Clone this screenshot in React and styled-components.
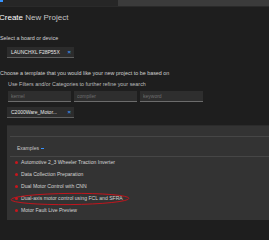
import React from "react";
import styled, { createGlobalStyle } from "styled-components";

const GlobalStyle = createGlobalStyle`
  html, body {
    margin: 0;
    padding: 0;
    background: #1e1e1e;
  }
  body {
    width: 269px;
    height: 240px;
    overflow: hidden;
    font-family: "Liberation Sans", Arial, sans-serif;
    color: #cccccc;
  }
`;

const TabBar = styled.div`
  display: flex;
  height: 6px;
  background: #3b3b3b;
  border-bottom: 1px solid #2a2a2a;
`;

const ActiveTab = styled.div`
  width: 118px;
  background: #262626;
  border-top: 2px solid transparent;
  box-sizing: border-box;
  position: relative;
  &::before {
    content: "";
    position: absolute;
    left: 0;
    top: -2px;
    width: 3px;
    height: 2px;
    background: #3794ff;
  }
`;

const Page = styled.div`
  display: flex;
  flex-direction: column;
  align-items: flex-start;
`;

const Title = styled.h1`
  margin: 6px 0 0 -1px;
  font-size: 8px;
  line-height: 9px;
  height: 9px;
  font-weight: normal;
  color: #c4c4c4;
  white-space: nowrap;
  span {
    color: #ffffff;
  }
`;

const Label = styled.div`
  margin-top: ${p => p.$top}px;
  margin-left: ${p => p.$left || 0}px;
  font-size: 5.4px;
  line-height: 6px;
  height: 6px;
  color: ${p => p.$dim ? "#bdbdbd" : "#d0d0d0"};
  white-space: nowrap;
`;

const Chip = styled.div`
  margin-top: ${p => p.$top}px;
  margin-left: 7px;
  width: 67px;
  height: 11px;
  box-sizing: border-box;
  background: #2c2c2c;
  border-bottom: 1px solid #5e5e5e;
  display: flex;
  align-items: center;
  justify-content: space-between;
  padding: 0 3px 0 4px;
  font-size: 5px;
  color: #e8e8e8;
  white-space: nowrap;
`;

const Remove = styled.span`
  color: #3b8eea;
  font-size: 6px;
  font-weight: bold;
  line-height: 6px;
`;

const FilterRow = styled.div`
  margin-top: 4px;
  margin-left: 8px;
  display: flex;
  gap: 3px;
`;

const Input = styled.input`
  width: 63px;
  height: 11px;
  box-sizing: border-box;
  margin: 0;
  padding: 0 3px;
  background: #2e2e2e;
  border: none;
  border-bottom: 1px solid #6c6c6c;
  outline: none;
  font-family: inherit;
  font-size: 5px;
  color: #cccccc;
  &::placeholder {
    color: #6e6e6e;
  }
`;

const Panel = styled.div`
  margin-top: 7px;
  margin-left: 7px;
  width: 262px;
  height: 95px;
  box-sizing: border-box;
  background: #333333;
  border-top: 1px solid #2b2b2b;
  padding: 10px 0 0 3px;
  position: relative;
`;

const ExamplesHeader = styled.div`
  border-top: 1px solid #464646;
  border-bottom: 1px solid #464646;
  display: flex;
  align-items: flex-end;
  padding: 0 0 5px 7px;
  box-sizing: border-box;
  height: 21px;
  font-size: 5px;
  line-height: 6px;
  color: #c8c8c8;
  gap: 2px;
`;

const Collapse = styled.span`
  display: inline-block;
  width: 3px;
  height: 1px;
  margin-bottom: 2px;
  background: #3794ff;
`;

const List = styled.ul`
  list-style: none;
  margin: -1px 0 0 0;
  padding: 0;
`;

const Item = styled.li`
  height: 12px;
  display: flex;
  align-items: center;
  gap: 3px;
  padding-left: 5px;
  font-size: 5.1px;
  color: #d4d4d4;
  white-space: nowrap;
`;

const Dot = styled.span`
  width: 3px;
  height: 3px;
  border-radius: 50%;
  background: #c8161d;
  flex: none;
`;

const Highlight = styled.svg`
  position: absolute;
  left: 2px;
  top: 66px;
  width: 122px;
  height: 14px;
  overflow: visible;
  pointer-events: none;
`;

const examples = [
  "Automotive 2_3 Wheeler Traction Inverter",
  "Data Collection Preparation",
  "Dual Motor Control with CNN",
  "Dual-axis motor control using FCL and SFRA",
  "Motor Fault Live Preview",
];

export default function App() {
  return (
    <>
      <GlobalStyle />
      <TabBar>
        <ActiveTab />
      </TabBar>
      <Page>
        <Title>
          <span>Create</span> New Project
        </Title>
        <Label $top={13}>Select a board or device</Label>
        <Chip $top={6}>
          LAUNCHXL F28P55X <Remove>×</Remove>
        </Chip>
        <Label $top={12}>
          Choose a template that you would like your new project to be based on
        </Label>
        <Label $top={5} $left={8} $dim>
          Use Filters and/or Categories to further refine your search
        </Label>
        <FilterRow>
          <Input placeholder="kernel" />
          <Input placeholder="compiler" />
          <Input placeholder="keyword" />
        </FilterRow>
        <Chip $top={5}>
          C2000Ware_Motor... <Remove>×</Remove>
        </Chip>
        <Panel>
          <ExamplesHeader>
            Examples <Collapse />
          </ExamplesHeader>
          <List>
            {examples.map(name => (
              <Item key={name}>
                <Dot />
                {name}
              </Item>
            ))}
          </List>
          <Highlight viewBox="0 0 122 14">
            <ellipse
              cx="61"
              cy="7"
              rx="59"
              ry="5.6"
              fill="none"
              stroke="#d0121b"
              strokeWidth="0.9"
              transform="rotate(-0.6 61 7)"
            />
          </Highlight>
        </Panel>
      </Page>
    </>
  );
}
